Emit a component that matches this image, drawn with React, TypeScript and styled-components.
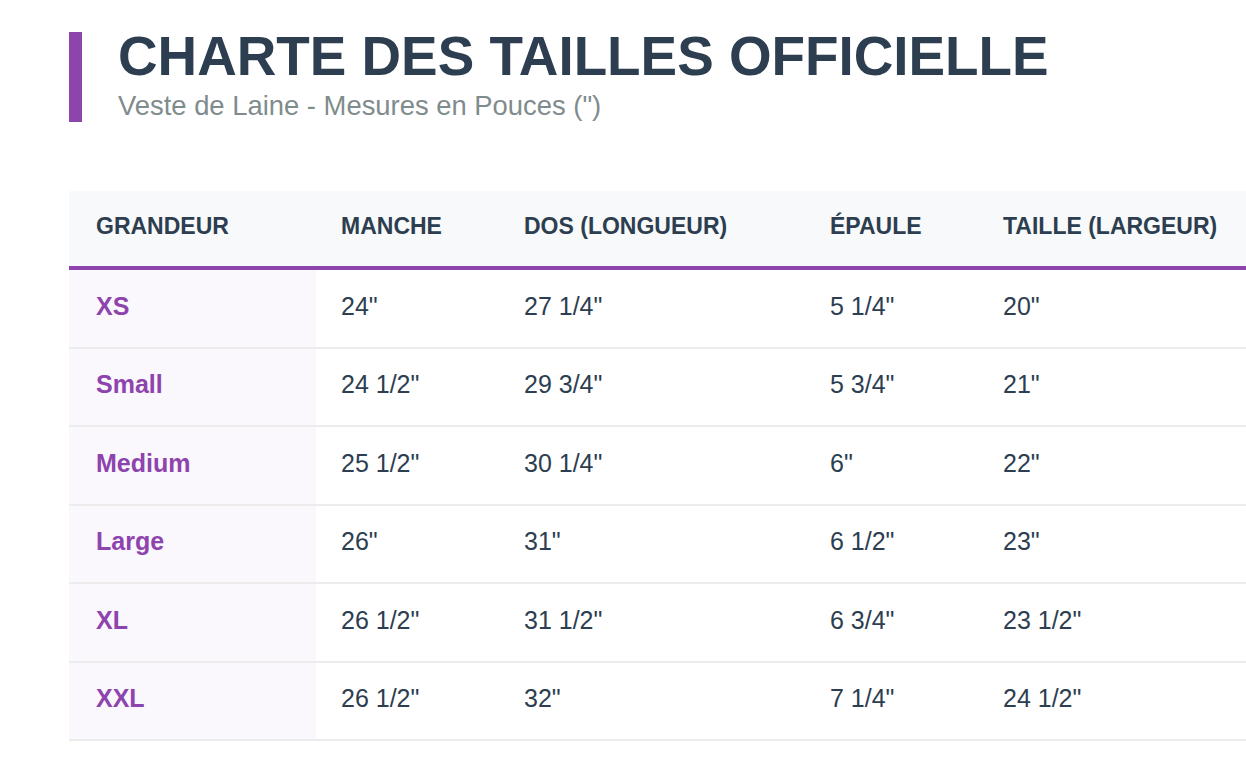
import React from 'react';
import styled, { createGlobalStyle } from 'styled-components';

interface SizeRow {
  size: string;
  manche: string;
  dos: string;
  epaule: string;
  taille: string;
}

const GlobalStyle = createGlobalStyle`
  html, body {
    margin: 0;
    padding: 0;
    background: #ffffff;
    overflow: hidden;
  }

  body {
    font-family: "Liberation Sans", Arial, sans-serif;
    color: #2c3e50;
  }
`;

const Page = styled.div`
  padding: 32px 0 0 69px;
`;

const Header = styled.header`
  border-left: 13px solid #8e44ad;
  padding: 0 0 1px 36px;
`;

const Title = styled.h1`
  margin: 0;
  font-size: 54.8px;
  line-height: 48px;
  font-weight: 700;
  color: #2c3e50;
  white-space: nowrap;
`;

const Subtitle = styled.p`
  margin: 10px 0 0 0;
  font-size: 27.4px;
  line-height: 31px;
  color: #7f8c8d;
`;

const Table = styled.table`
  margin-top: 69px;
  width: 1177px;
  table-layout: fixed;
  border-collapse: collapse;
`;

/* widths are content widths: padding comes on top */
const HeadCell = styled.th<{ $width?: number; $first?: boolean }>`
  width: ${(p) => (p.$width ? `${p.$width}px` : 'auto')};
  background: #f8f9fa;
  text-align: left;
  font-size: 23px;
  line-height: 26.5px;
  font-weight: 700;
  color: #2c3e50;
  padding: 22px 25px 26.5px ${(p) => (p.$first ? '27px' : '25px')};
  border-bottom: 4px solid #8e44ad;
  white-space: nowrap;
`;

const Row = styled.tr`
  border-bottom: 2px solid #ececec;
`;

const Cell = styled.td<{ $size?: boolean }>`
  font-size: 25px;
  line-height: 28.5px;
  padding: 21.5px 25px 26.5px ${(p) => (p.$size ? '27px' : '25px')};
  white-space: nowrap;
  color: ${(p) => (p.$size ? '#8e44ad' : '#2c3e50')};
  font-weight: ${(p) => (p.$size ? 700 : 400)};
  background: ${(p) => (p.$size ? '#faf7fd' : 'transparent')};
`;

const rows: SizeRow[] = [
  { size: 'XS', manche: '24"', dos: '27 1/4"', epaule: '5 1/4"', taille: '20"' },
  { size: 'Small', manche: '24 1/2"', dos: '29 3/4"', epaule: '5 3/4"', taille: '21"' },
  { size: 'Medium', manche: '25 1/2"', dos: '30 1/4"', epaule: '6"', taille: '22"' },
  { size: 'Large', manche: '26"', dos: '31"', epaule: '6 1/2"', taille: '23"' },
  { size: 'XL', manche: '26 1/2"', dos: '31 1/2"', epaule: '6 3/4"', taille: '23 1/2"' },
  { size: 'XXL', manche: '26 1/2"', dos: '32"', epaule: '7 1/4"', taille: '24 1/2"' },
];

const App: React.FC = () => {
  return (
    <Page>
      <GlobalStyle />
      <Header>
        <Title>CHARTE DES TAILLES OFFICIELLE</Title>
        <Subtitle>Veste de Laine - Mesures en Pouces (")</Subtitle>
      </Header>
      <Table>
        <thead>
          <tr>
            <HeadCell $first $width={195}>GRANDEUR</HeadCell>
            <HeadCell $width={133}>MANCHE</HeadCell>
            <HeadCell $width={256}>DOS (LONGUEUR)</HeadCell>
            <HeadCell $width={123}>ÉPAULE</HeadCell>
            <HeadCell>TAILLE (LARGEUR)</HeadCell>
          </tr>
        </thead>
        <tbody>
          {rows.map((row) => (
            <Row key={row.size}>
              <Cell $size>{row.size}</Cell>
              <Cell>{row.manche}</Cell>
              <Cell>{row.dos}</Cell>
              <Cell>{row.epaule}</Cell>
              <Cell>{row.taille}</Cell>
            </Row>
          ))}
        </tbody>
      </Table>
    </Page>
  );
};

export default App;
